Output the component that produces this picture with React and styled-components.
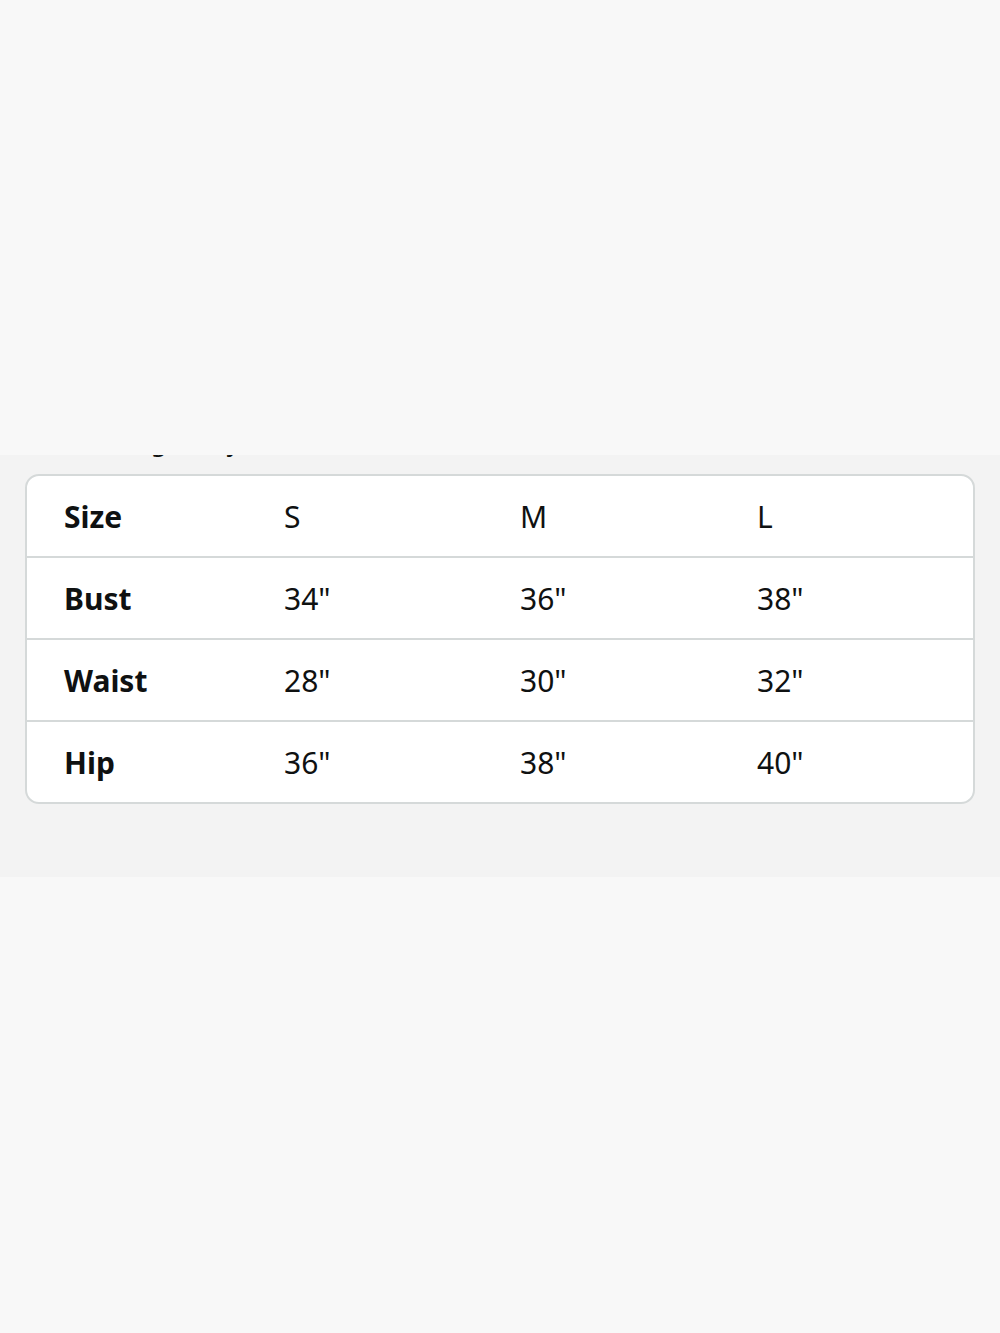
import React from "react";
import styled, { createGlobalStyle } from "styled-components";

const Global = createGlobalStyle`
  html, body {
    margin: 0;
    padding: 0;
    background: #f8f8f8;
    font-family: "Noto Sans", "Open Sans", sans-serif;
    color: #0f1111;
  }
`;

const Page = styled.div`
  display: flex;
  flex-direction: column;
  min-height: 1333px;
`;

const Top = styled.div`
  height: 455px;
  background: #f8f8f8;
`;

const Band = styled.section`
  height: 422px;
  background: #f3f3f3;
  overflow: hidden;
  box-sizing: border-box;
  padding: 0 25px;
`;

/* heading above the table, scrolled out of view: only descender tips peek through */
const Caption = styled.div`
  margin-top: -29px;
  padding-left: 71px;
  font-size: 26px;
  line-height: 30px;
  white-space: nowrap;
`;

const Card = styled.div`
  margin-top: 18px;
  background: #fff;
  border: 2px solid #d5d9d9;
  border-radius: 14px;
  overflow: hidden;
`;

const Row = styled.div`
  display: grid;
  grid-template-columns: 220px 236px 237px 1fr;
  align-items: center;
  height: 80px;
  padding: 0 37px;
  border-bottom: ${(p) => (p.$last ? "none" : "2px solid #d5d9d9")};
`;

const Cell = styled.div`
  font-size: 30px;
  font-weight: ${(p) => (p.$head ? 700 : 400)};
`;

const Bottom = styled.div`
  flex: 1;
  background: #f8f8f8;
`;

const rows = [
  ["Size", "S", "M", "L"],
  ["Bust", '34"', '36"', '38"'],
  ["Waist", '28"', '30"', '32"'],
  ["Hip", '36"', '38"', '40"'],
];

export default function App() {
  return (
    <Page>
      <Global />
      <Top />
      <Band>
        <Caption>Size guide you can trust</Caption>
        <Card>
          {rows.map((r, i) => (
            <Row key={r[0]} $last={i === rows.length - 1}>
              {r.map((c, j) => (
                <Cell key={j} $head={j === 0}>
                  {c}
                </Cell>
              ))}
            </Row>
          ))}
        </Card>
      </Band>
      <Bottom />
    </Page>
  );
}
